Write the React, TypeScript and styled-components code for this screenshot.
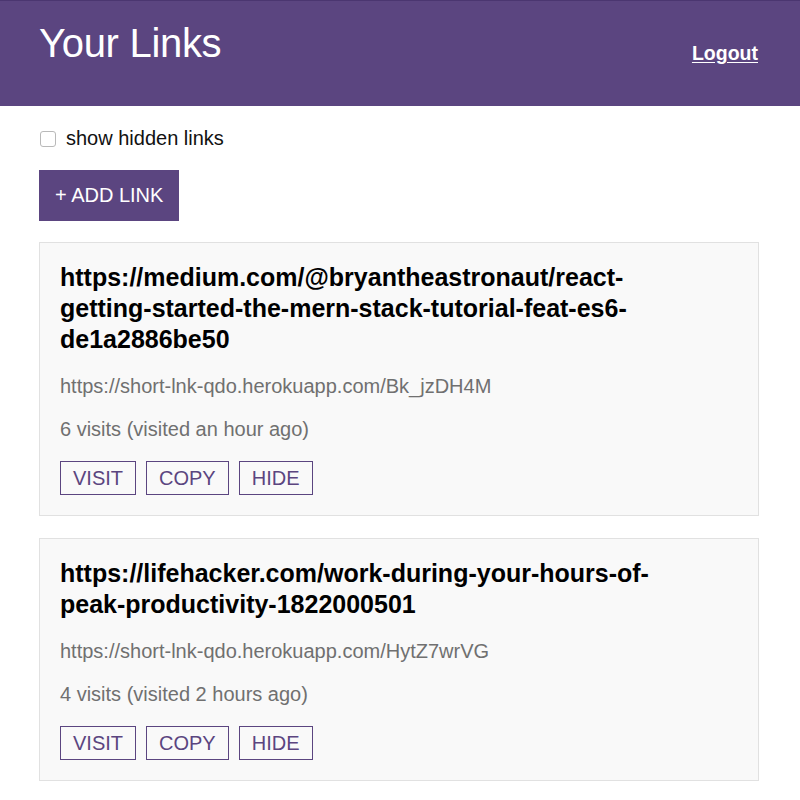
import React from "react";
import styled, { createGlobalStyle } from "styled-components";

const purple = "#5b4580";

const Global = createGlobalStyle`
  html, body { margin: 0; padding: 0; background: #fff; }
  body { font-family: "Liberation Sans", Arial, sans-serif; color: #000; }
  * { box-sizing: border-box; }
`;

const Header = styled.header`
  height: 106px;
  background: ${purple};
  border-top: 1px solid #4b3670;
  display: flex;
  align-items: center;
  justify-content: space-between;
  padding: 0 42px 0 39px;
`;

const Title = styled.h1`
  margin: 0 0 21px 0;
  font-size: 40px;
  font-weight: 400;
  line-height: 46px;
  color: #fff;
  letter-spacing: -0.3px;
`;

const LogoutButton = styled.button`
  background: none;
  border: none;
  padding: 0;
  font-family: "Liberation Sans", Arial, sans-serif;
  font-size: 19.5px;
  font-weight: 700;
  color: #fff;
  text-decoration: underline;
  text-underline-offset: 2px;
  cursor: pointer;
`;

const Main = styled.main`
  padding: 0 41px 40px 39px;
  display: flex;
  flex-direction: column;
  align-items: flex-start;
`;

const CheckRow = styled.label`
  margin-top: 21px;
  display: flex;
  align-items: center;
  gap: 10px;
  font-size: 20px;
  line-height: 23px;
  color: #111;
`;

const Check = styled.span`
  width: 16px;
  height: 16px;
  margin-left: 1px;
  border: 1px solid #b9b9b9;
  border-radius: 3px;
  background: #fff;
`;

const AddButton = styled.button`
  margin-top: 20px;
  background: ${purple};
  color: #fff;
  border: none;
  font-family: "Liberation Sans", Arial, sans-serif;
  font-size: 20px;
  line-height: 23px;
  padding: 14px 16px;
`;

const List = styled.div`
  margin-top: 21px;
  align-self: stretch;
  display: flex;
  flex-direction: column;
  gap: 22px;
`;

const Card = styled.div`
  background: #f9f9f9;
  border: 1px solid #e1e1e1;
  padding: 19px 20px 20px 20px;
`;

const CardTitle = styled.h2`
  margin: 0;
  max-width: 640px;
  font-size: 25px;
  line-height: 31px;
  font-weight: 700;
  color: #000;
`;

const Meta = styled.p`
  margin: 20px 0 0 0;
  font-size: 20px;
  line-height: 23px;
  color: #707070;
`;

const Actions = styled.div`
  margin-top: 20px;
  display: flex;
  gap: 10px;
`;

const ActionButton = styled.button`
  background: transparent;
  border: 1px solid ${purple};
  color: ${purple};
  font-family: "Liberation Sans", Arial, sans-serif;
  font-size: 20px;
  line-height: 24px;
  padding: 4px 12px;
`;

const links = [
  {
    url: "https://medium.com/@bryantheastronaut/react-getting-started-the-mern-stack-tutorial-feat-es6-de1a2886be50",
    short: "https://short-lnk-qdo.herokuapp.com/Bk_jzDH4M",
    visits: "6 visits (visited an hour ago)",
  },
  {
    url: "https://lifehacker.com/work-during-your-hours-of-peak-productivity-1822000501",
    short: "https://short-lnk-qdo.herokuapp.com/HytZ7wrVG",
    visits: "4 visits (visited 2 hours ago)",
  },
];

export default function App() {
  return (
    <>
      <Global />
      <Header>
        <Title>Your Links</Title>
        <LogoutButton>Logout</LogoutButton>
      </Header>
      <Main>
        <CheckRow>
          <Check />
          show hidden links
        </CheckRow>
        <AddButton>+ ADD LINK</AddButton>
        <List>
          {links.map((l) => (
            <Card key={l.short}>
              <CardTitle>{l.url}</CardTitle>
              <Meta>{l.short}</Meta>
              <Meta>{l.visits}</Meta>
              <Actions>
                <ActionButton>VISIT</ActionButton>
                <ActionButton>COPY</ActionButton>
                <ActionButton>HIDE</ActionButton>
              </Actions>
            </Card>
          ))}
        </List>
      </Main>
    </>
  );
}
